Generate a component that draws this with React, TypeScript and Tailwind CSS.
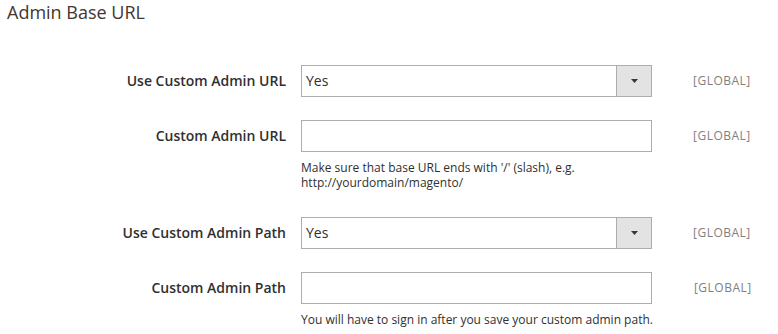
import React from 'react';

type Row = {
  label: string;
  kind: 'select' | 'text';
  value?: string;
  note?: React.ReactNode;
};

const rows: Row[] = [
  { label: 'Use Custom Admin URL', kind: 'select', value: 'Yes' },
  {
    label: 'Custom Admin URL',
    kind: 'text',
    note: (
      <>
        Make sure that base URL ends with '/' (slash), e.g.
        <br />
        http://yourdomain/magento/
      </>
    ),
  },
  { label: 'Use Custom Admin Path', kind: 'select', value: 'Yes' },
  {
    label: 'Custom Admin Path',
    kind: 'text',
    note: 'You will have to sign in after you save your custom admin path.',
  },
];

const SelectBox = ({ value }: { value?: string }) => (
  <div className="flex h-[32px] w-[351px] border border-[#adadad] bg-white">
    <div className="flex-1 pl-[4px] text-[14px] leading-[30px] text-[#303030]">{value}</div>
    <div className="flex w-[35px] items-center justify-center border-l border-[#adadad] bg-[#e3e3e3]">
      <svg width="7" height="4" viewBox="0 0 7 4">
        <path d="M0 0h7L3.5 4z" fill="#41362f" />
      </svg>
    </div>
  </div>
);

const TextBox = () => <div className="h-[32px] w-[351px] border border-[#adadad] bg-white" />;

export default function App() {
  return (
    <div className="min-h-screen bg-white font-['Open_Sans',sans-serif]">
      <h2 className="pl-[7px] pt-px text-[18px] font-medium leading-[23px] text-[#41362f]">Admin Base URL</h2>

      <div className="mt-[41px] flex flex-col gap-[23px]">
        {rows.map((row, i) => (
          <div key={i} className="flex items-start">
            <label className="w-[286px] text-right text-[14px] font-semibold leading-[32px] text-[#303030]">
              {row.label}
            </label>
            <div className="ml-[15px]">
              {row.kind === 'select' ? <SelectBox value={row.value} /> : <TextBox />}
              {row.note && (
                <div className="mt-[8px] pb-[4px] text-[12px] leading-[15px] text-[#303030]">{row.note}</div>
              )}
            </div>
            <div className="ml-[41px] text-[12px] leading-[32px] tracking-[0.5px] text-[#808080]">[GLOBAL]</div>
          </div>
        ))}
      </div>
    </div>
  );
}
